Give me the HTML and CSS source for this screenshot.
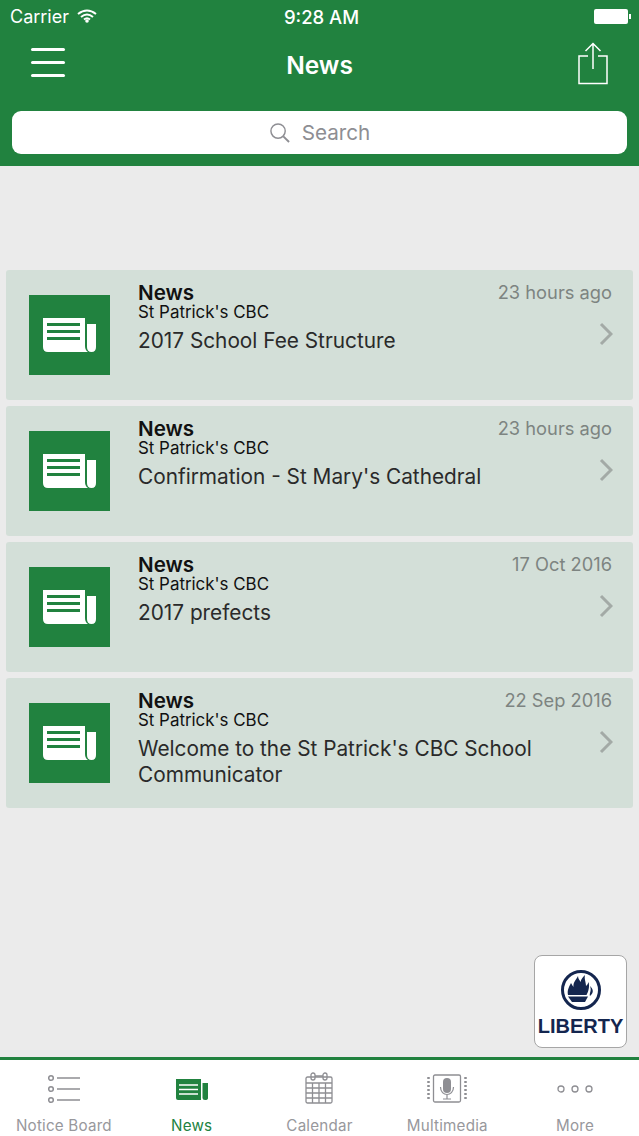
FILE: index.html
```html
<!DOCTYPE html>
<html lang="en">
<head>
    <meta charset="UTF-8">
    <meta name="viewport" content="width=device-width, initial-scale=1.0">
    <title>News</title>
    <link rel="stylesheet" href="styles.css">
</head>
<body>
    <svg class="sprites" width="0" height="0">
        <symbol id="paper" viewBox="0 0 53 34">
            <path d="M0 0H42V28Q42 32 45 34H5Q0 34 0 29Z" fill="currentColor"/>
            <path d="M44 6H53V29Q53 34 48.500 34Q44 34 44 29Z" fill="currentColor"/>
        </symbol>
    </svg>

    <header class="top">
        <div class="status">
            <div class="status-left">
                <span>Carrier</span>
                <svg width="20" height="14" viewBox="0 0 20 14">
                    <path d="M1 5Q10 -2 19 5M4 8Q10 3 16 8M7 10.500Q10 8 13 10.500" fill="none" stroke="#fff" stroke-width="2"/>
                    <circle cx="10" cy="12" r="1.800" fill="#fff"/>
                </svg>
            </div>
            <div class="status-time">9:28 AM</div>
            <div class="battery"><span class="battery-body"></span><span class="battery-tip"></span></div>
        </div>
        <div class="nav">
            <div class="burger"><span></span><span></span><span></span></div>
            <h1>News</h1>
            <svg class="share" width="30" height="43" viewBox="0 0 30 43">
                <path d="M10 14H1V41.500H29V14H20" fill="none" stroke="#fff" stroke-width="1.500"/>
                <path d="M15 27V2M7.500 9L15 1.500L22.500 9" fill="none" stroke="#fff" stroke-width="1.500"/>
            </svg>
        </div>
        <div class="search">
            <svg width="21" height="21" viewBox="0 0 22 22">
                <circle cx="9.500" cy="9.500" r="7.500" fill="none" stroke="#8e8e93" stroke-width="1.500"/>
                <path d="M15 15L21 21" stroke="#8e8e93" stroke-width="2"/>
            </svg>
            <span>Search</span>
        </div>
    </header>

    <main class="list">
        <article class="card">
            <div class="thumb"><svg width="53" height="34"><use href="#paper"/></svg><div class="lines"><i></i><i></i><i></i></div></div>
            <div class="card-text">
                <div class="card-kind">News</div>
                <div class="card-school">St Patrick's CBC</div>
                <div class="card-title">2017 School Fee Structure</div>
            </div>
            <div class="card-side">
                <div class="card-date">23 hours ago</div>
                <svg class="chev" width="14" height="24" viewBox="0 0 14 24"><path d="M2 2L12 12L2 22" fill="none" stroke="#a3aaa6" stroke-width="3"/></svg>
            </div>
        </article>
        <article class="card">
            <div class="thumb"><svg width="53" height="34"><use href="#paper"/></svg><div class="lines"><i></i><i></i><i></i></div></div>
            <div class="card-text">
                <div class="card-kind">News</div>
                <div class="card-school">St Patrick's CBC</div>
                <div class="card-title">Confirmation - St Mary's Cathedral</div>
            </div>
            <div class="card-side">
                <div class="card-date">23 hours ago</div>
                <svg class="chev" width="14" height="24" viewBox="0 0 14 24"><path d="M2 2L12 12L2 22" fill="none" stroke="#a3aaa6" stroke-width="3"/></svg>
            </div>
        </article>
        <article class="card">
            <div class="thumb"><svg width="53" height="34"><use href="#paper"/></svg><div class="lines"><i></i><i></i><i></i></div></div>
            <div class="card-text">
                <div class="card-kind">News</div>
                <div class="card-school">St Patrick's CBC</div>
                <div class="card-title">2017 prefects</div>
            </div>
            <div class="card-side">
                <div class="card-date">17 Oct 2016</div>
                <svg class="chev" width="14" height="24" viewBox="0 0 14 24"><path d="M2 2L12 12L2 22" fill="none" stroke="#a3aaa6" stroke-width="3"/></svg>
            </div>
        </article>
        <article class="card">
            <div class="thumb"><svg width="53" height="34"><use href="#paper"/></svg><div class="lines"><i></i><i></i><i></i></div></div>
            <div class="card-text">
                <div class="card-kind">News</div>
                <div class="card-school">St Patrick's CBC</div>
                <div class="card-title">Welcome to the St Patrick's CBC School Communicator</div>
            </div>
            <div class="card-side">
                <div class="card-date">22 Sep 2016</div>
                <svg class="chev" width="14" height="24" viewBox="0 0 14 24"><path d="M2 2L12 12L2 22" fill="none" stroke="#a3aaa6" stroke-width="3"/></svg>
            </div>
        </article>
    </main>

    <div class="badge">
        <svg width="42" height="42" viewBox="0 0 42 42">
            <circle cx="21" cy="21" r="18.500" fill="none" stroke="#14264f" stroke-width="3"/>
            <path d="M8 26C7 21 9 18 11 14C12 16 13 17 13.500 18C13 13 16 11 18 7C18 10 20 11 20.500 13C21 10 23 8 25 6C24 10 26 13 26 17C27 16 28 15 28.500 13C30 18 28 23 26.500 26Z" fill="#14264f"/>
            <path d="M30 17C33.500 20 34 24 30 27C29 24 32 22 30 17Z" fill="#14264f"/>
            <path d="M8 27.500H28L25 33H12Z" fill="#14264f"/>
        </svg>
        <div class="badge-name">LIBERTY</div>
    </div>

    <nav class="tabs">
        <div class="tab">
            <svg width="34" height="30" viewBox="0 0 34 30">
                <g fill="none" stroke="#8e8e93" stroke-width="1.500"><circle cx="4" cy="4" r="2.300"/><circle cx="4" cy="15" r="2.300"/><circle cx="4" cy="26" r="2.300"/></g>
                <path d="M10 4H33M10 15H33M10 26H33" stroke="#8e8e93" stroke-width="1.500"/>
            </svg>
            <span>Notice Board</span>
        </div>
        <div class="tab tab-on">
            <div class="tab-paper">
                <svg width="32" height="21" viewBox="0 0 32 21">
                    <path d="M0 0H25V21H2Q0 21 0 19Z" fill="#21823f"/>
                    <path d="M26.500 4H32V19Q32 21 29 21Q26.500 21 26.500 19Z" fill="#21823f"/>
                    <path d="M3 6H22M3 10.500H22M3 15H22" stroke="#fff" stroke-width="1.500"/>
                </svg>
            </div>
            <span>News</span>
        </div>
        <div class="tab">
            <svg width="28" height="32" viewBox="0 0 28 32">
                <g fill="none" stroke="#8e8e93" stroke-width="1.300">
                    <rect x="1" y="5" width="26" height="26" rx="1.500"/>
                    <rect x="6" y="1" width="4" height="7" rx="2"/>
                    <rect x="18" y="1" width="4" height="7" rx="2"/>
                    <path d="M10 4H18M1 11H27M1 16H27M1 21H27M1 26H27M7.500 11V31M14 11V31M20.500 11V31"/>
                </g>
            </svg>
            <span>Calendar</span>
        </div>
        <div class="tab">
            <svg width="40" height="30" viewBox="0 0 40 30">
                <rect x="6.500" y="1" width="27" height="27" rx="1.500" fill="none" stroke="#8e8e93" stroke-width="1.300"/>
                <path d="M1.500 3V27M38.500 3V27" stroke="#8e8e93" stroke-width="2.500" stroke-dasharray="2 2"/>
                <rect x="16" y="4" width="8" height="15" rx="4" fill="#8e8e93"/>
                <path d="M13.500 13C13.500 23 26.500 23 26.500 13M20 21V25M16 25H24" fill="none" stroke="#8e8e93" stroke-width="1.200"/>
            </svg>
            <span>Multimedia</span>
        </div>
        <div class="tab">
            <svg width="36" height="30" viewBox="0 0 36 30">
                <g fill="none" stroke="#8e8e93" stroke-width="1.300"><circle cx="4" cy="15" r="3"/><circle cx="18" cy="15" r="3"/><circle cx="32" cy="15" r="3"/></g>
            </svg>
            <span>More</span>
        </div>
    </nav>
</body>
</html>
```

FILE: styles.css
```css
* {
    box-sizing: border-box;
}
html, body {
    margin: 0;
    height: 1136px;
    overflow: hidden;
}
body {
    font-family: Inter, "Liberation Sans", sans-serif;
    background-color: #ebebeb;
    display: flex;
    flex-direction: column;
    position: relative;
}
.sprites {
    position: absolute;
}
.top {
    background-color: #21823f;
    height: 166px;
    padding: 0 12px;
    color: #fff;
    flex-shrink: 0;
}
.status {
    height: 33px;
    margin: 0 -2px;
    display: flex;
    justify-content: space-between;
    align-items: center;
    font-size: 18px;
    position: relative;
}
.status-left {
    display: flex;
    align-items: center;
    gap: 8px;
    margin-top: -1px;
}
.status-time {
    position: absolute;
    left: 4px;
    right: 0;
    text-align: center;
    font-size: 18.500px;
    font-weight: 500;
}
.battery {
    display: flex;
    align-items: center;
    gap: 1px;
    margin-right: -2px;
}
.battery-body {
    width: 34px;
    height: 15px;
    background-color: #fff;
    border-radius: 2px;
}
.battery-tip {
    width: 2px;
    height: 5px;
    background-color: #fff;
}
.nav {
    height: 78px;
    display: flex;
    justify-content: space-between;
    align-items: center;
    padding: 0 19px;
    position: relative;
}
.nav h1 {
    position: absolute;
    left: 0;
    right: 0;
    margin: 0 0 14px;
    text-align: center;
    font-size: 24.500px;
    font-weight: 600;
}
.burger {
    width: 34px;
    display: flex;
    flex-direction: column;
    gap: 9.500px;
    margin-bottom: 19px;
}
.burger span {
    height: 3.500px;
    background-color: #fff;
    border-radius: 2px;
}
.share {
    margin-bottom: 18px;
}
.search {
    height: 43px;
    background-color: #fff;
    border-radius: 9px;
    display: flex;
    justify-content: center;
    align-items: center;
    gap: 12px;
    color: #8e8e93;
    font-size: 20.700px;
}
.list {
    padding: 104px 6px 0;
    display: flex;
    flex-direction: column;
    gap: 6px;
}
.card {
    height: 130px;
    background-color: #d3dfd8;
    border-radius: 3px;
    padding: 12px 20px 0 23px;
    display: flex;
}
.thumb {
    width: 81px;
    height: 80px;
    margin-top: 13px;
    background-color: #21823f;
    flex-shrink: 0;
    display: flex;
    align-items: center;
    justify-content: center;
    position: relative;
    color: #fff;
}
.lines {
    position: absolute;
    left: 18px;
    top: 28px;
    width: 33px;
    display: flex;
    flex-direction: column;
    gap: 4px;
}
.lines i {
    height: 3px;
    background-color: #21823f;
}
.card-text {
    margin-left: 28px;
    flex: 1;
    color: #111;
}
.card-kind {
    font-size: 20.600px;
    font-weight: 600;
    line-height: 22px;
}
.card-school {
    font-size: 16.900px;
    line-height: 17px;
}
.card-title {
    font-size: 20.800px;
    line-height: 26px;
    margin-top: 7px;
    color: #2a2a2a;
    max-width: 410px;
}
.card-side {
    width: 120px;
    margin-left: -60px;
    display: flex;
    flex-direction: column;
    align-items: flex-end;
}
.card-date {
    font-size: 18.300px;
    line-height: 22px;
    margin: -1px 1px 0 0;
    color: #7d8481;
    white-space: nowrap;
}
.chev {
    margin-top: 19px;
}
.badge {
    position: absolute;
    left: 534px;
    top: 955px;
    width: 93px;
    height: 93px;
    background-color: #fff;
    border: 1px solid #a6a6a6;
    border-radius: 8px;
    display: flex;
    flex-direction: column;
    align-items: center;
    padding-top: 13px;
}
.badge-name {
    font-family: "Liberation Sans", sans-serif;
    font-weight: 700;
    font-size: 20px;
    line-height: 24px;
    margin-top: 3px;
    color: #14264f;
}
.tabs {
    position: absolute;
    left: 0;
    right: 0;
    bottom: 0;
    height: 79px;
    background-color: #fff;
    border-top: 3px solid #21823f;
    display: grid;
    grid-template-columns: repeat(5, 1fr);
}
.tab {
    display: flex;
    flex-direction: column;
    align-items: center;
    justify-content: flex-end;
    gap: 12px;
    color: #98989c;
    font-size: 15.200px;
    padding-bottom: 1px;
    letter-spacing: 0.2px;
}
.tab svg {
    display: block;
}
.tab-on {
    color: #21823f;
}
.tab-paper {
    height: 30px;
    display: flex;
    align-items: center;
}
```
